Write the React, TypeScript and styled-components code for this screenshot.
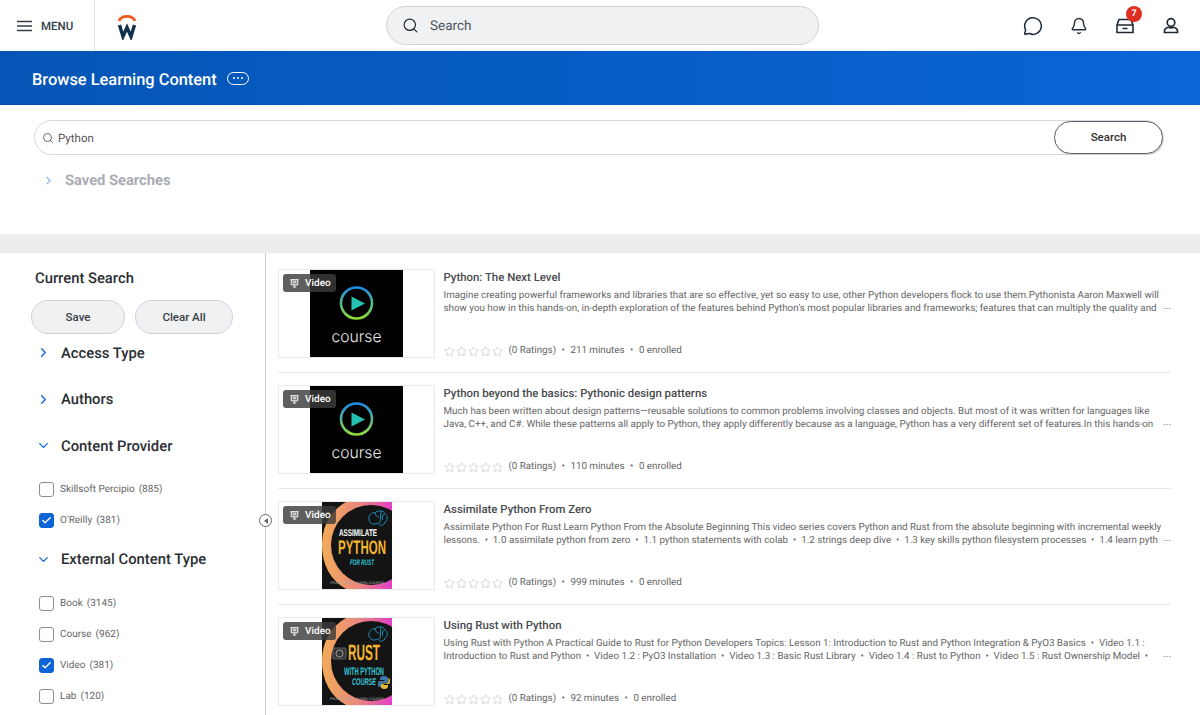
import React from 'react'
import styled, { createGlobalStyle } from 'styled-components'
import { Bell, ChevronDown, ChevronRight, Check, MessageCircle, Search as SearchIcon, Star } from 'lucide-react'

const GlobalStyle = createGlobalStyle`
  html, body {
    margin: 0;
    padding: 0;
    height: 715px;
    overflow: hidden;
    background: #fff;
    font-family: Roboto, "Liberation Sans", sans-serif;
    color: #333;
    text-rendering: geometricPrecision;
  }
  * { box-sizing: border-box; }
`

const Page = styled.div`
  width: 1200px;
  height: 715px;
  display: flex;
  flex-direction: column;
  overflow: hidden;
`

const TopBar = styled.header`
  height: 51px;
  flex: none;
  display: flex;
  align-items: center;
  background: #fff;
`

const MenuArea = styled.div`
  width: 95px;
  height: 51px;
  flex: none;
  display: flex;
  align-items: center;
  gap: 9px;
  padding-left: 17px;
  border-right: 1px solid #dfe2e6;
  font-size: 11.5px;
  font-weight: 500;
  color: #333d47;
`

const Burger = styled.svg`
  width: 15px;
  height: 12px;
  color: #333d47;
`

const Logo = styled.svg`
  width: 22px;
  height: 28px;
  flex: none;
  margin-left: 21px;
`

const GlobalSearch = styled.div`
  width: 433px;
  height: 39px;
  flex: none;
  margin-left: 248px;
  display: flex;
  align-items: center;
  gap: 11px;
  padding-left: 15px;
  border-radius: 20px;
  background: #f0f1f2;
  border: 1px solid #ced3d9;
  font-size: 13.500px;
  color: #4a5561;
`

const TopIcons = styled.div`
  display: flex;
  flex: none;
  align-items: center;
  margin-left: 191px;
  color: #1e2a36;
`

const IconSlot = styled.div`
  width: 46px;
  display: flex;
  justify-content: center;
  position: relative;
`

const Badge = styled.span`
  position: absolute;
  top: -12px;
  right: 6px;
  width: 16px;
  height: 16px;
  border-radius: 50%;
  background: #de2e21;
  color: #fff;
  font-size: 9px;
  font-weight: 700;
  line-height: 16px;
  text-align: center;
`

const Banner = styled.div`
  height: 54px;
  flex: none;
  display: flex;
  align-items: center;
  gap: 10px;
  padding-left: 32px;
  background: linear-gradient(90deg, #0455b5 0%, #0b65d6 100%);
  color: #fff;
`

const BannerTitle = styled.h1`
  margin: 4px 0 0;
  font-size: 16.4px;
  font-weight: 500;
`

const MorePill = styled.div`
  width: 22px;
  height: 13px;
  display: flex;
  align-items: center;
  justify-content: center;
  gap: 2px;
  border: 1px solid #fff;
  border-radius: 7px;
`

const Dot = styled.i`
  width: 2px;
  height: 2px;
  border-radius: 50%;
  background: #fff;
`

const SearchPanel = styled.section`
  height: 129px;
  flex: none;
  padding: 15px 37px 0 34px;
`

const SearchField = styled.div`
  height: 35px;
  display: flex;
  align-items: center;
  gap: 4px;
  padding: 1px 0 0 7px;
  position: relative;
  border: 1px solid #d5d8de;
  border-radius: 18px;
  font-size: 11.500px;
  color: #555;
`

const SearchButton = styled.button`
  position: absolute;
  right: -1px;
  top: 0;
  width: 109px;
  height: 33px;
  padding-bottom: 2px;
  border: 1px solid #5a5f66;
  border-radius: 17px;
  background: #fff;
  box-shadow: 1px 1px 1px #d0d3d8;
  font: 500 11.500px Roboto, sans-serif;
  color: #333;
`

const SavedRow = styled.div`
  display: flex;
  align-items: center;
  gap: 10px;
  margin: 16px 0 0 8px;
  font-size: 14.7px;
  font-weight: 700;
  color: #a9adb2;
`

const Divider = styled.div`
  height: 19px;
  flex: none;
  background: #eceeed;
`

const Body = styled.div`
  flex: 1;
  display: flex;
  min-height: 0;
`

const Sidebar = styled.aside`
  width: 266px;
  flex: none;
  position: relative;
  padding: 17px 0 0 31px;
  border-right: 1px solid #c9ccd0;
`

const CollapseHandle = styled.div`
  position: absolute;
  top: 261px;
  right: -7px;
  width: 13px;
  height: 13px;
  border-radius: 50%;
  border: 1px solid #666;
  background: #fff;
  display: flex;
  align-items: center;
  justify-content: center;
  &::before {
    content: '';
    border-style: solid;
    border-width: 3px 4px 3px 0;
    border-color: transparent #666 transparent transparent;
  }
`

const SideTitle = styled.h2`
  margin: 0 0 13px 4px;
  font-size: 14.8px;
  font-weight: 500;
  line-height: 17px;
  color: #2b2f33;
`

const ButtonRow = styled.div`
  display: flex;
  gap: 10px;
`

const PillButton = styled.button<{ $w: number }>`
  width: ${p => p.$w}px;
  height: 34px;
  border-radius: 17px;
  border: 1px solid #ced3d9;
  background: #f0f1f2;
  font: 500 11.500px Roboto, sans-serif;
  color: #3a3f44;
`

const FacetHead = styled.div<{ $h: number; $mt?: number }>`
  display: flex;
  align-items: flex-start;
  gap: 10px;
  height: ${p => p.$h}px;
  margin-top: ${p => p.$mt ?? 0}px;
  padding-left: 5px;
  font-size: 14.8px;
  font-weight: 500;
  line-height: 18px;
  color: #2b2f33;
  svg { color: #0b65d6; flex: none; margin-top: 1.500px; }
`

const Facets = styled.div`
  margin-top: 9.500px;
`

const CheckRow = styled.label`
  display: flex;
  align-items: center;
  gap: 6px;
  height: 31px;
  padding-left: 8px;
  font-size: 10px;
  color: #666;
`

const Box = styled.span<{ $on?: boolean }>`
  width: 15px;
  height: 15px;
  flex: none;
  display: flex;
  align-items: center;
  justify-content: center;
  border-radius: 3px;
  border: 1px solid ${p => (p.$on ? '#0b65d6' : '#8a9099')};
  background: ${p => (p.$on ? '#0b65d6' : '#fff')};
  color: #fff;
`

const Count = styled.span`
  margin-left: 4px;
`

const Results = styled.main`
  flex: 1;
  min-width: 0;
  padding: 16px 29px 0 12px;
`

const Card = styled.article`
  height: 104px;
  margin-bottom: 12px;
  display: flex;
  gap: 8.500px;
  border-bottom: 1px solid #e8eaec;
`

const Thumb = styled.div`
  width: 157px;
  height: 89px;
  flex: none;
  position: relative;
  display: flex;
  justify-content: center;
  border: 1px solid #e8eaec;
  background: #fff;
`

const TypeTag = styled.div`
  position: absolute;
  top: 4px;
  left: 4px;
  z-index: 1;
  width: 53px;
  height: 18px;
  display: flex;
  align-items: center;
  gap: 6px;
  padding-left: 7px;
  border-radius: 3px;
  background: rgba(60, 60, 60, 0.82);
  color: #fff;
  font-size: 10px;
  font-weight: 500;
`

const Poster = styled.svg<{ $w: number }>`
  width: ${p => p.$w}px;
  height: 87px;
  display: block;
  overflow: visible;
`

const Info = styled.div`
  flex: 1;
  min-width: 0;
  height: 89px;
  display: flex;
  flex-direction: column;
`

const CardTitle = styled.h3`
  margin: 0;
  font-size: 11.4px;
  font-weight: 500;
  line-height: 16px;
  color: #484b4e;
`

const Descr = styled.div`
  margin-top: 4px;
  position: relative;
  padding-right: 12px;
  font-size: 9.800px;
  line-height: 13px;
  color: #666;
  white-space: pre;
  &::after {
    content: '...';
    position: absolute;
    right: 0;
    bottom: 2px;
  }
`

const Meta = styled.div`
  margin-top: auto;
  display: flex;
  align-items: center;
  font-size: 9.800px;
  line-height: 14px;
  color: #666;
  svg { color: #b4b7ba; margin-right: 1.200px; }
`

const Ratings = styled.span`
  margin-left: 4px;
`

const Sep = styled.span`
  margin: 0 5.500px;
`

const CoursePoster = () => (
  <Poster $w={93} viewBox="0 0 93 87">
    <defs>
      <linearGradient id="ring" x1="0" y1="0" x2="0" y2="1">
        <stop offset="0" stopColor="#1a8fe8" />
        <stop offset="1" stopColor="#8fdc3a" />
      </linearGradient>
    </defs>
    <rect width="93" height="87" fill="#000" />
    <circle cx="46.500" cy="33" r="15.500" fill="none" stroke="url(#ring)" strokeWidth="2.600" />
    <path d="M41.500 26.500 L55 33.500 L41.500 40.500 Z" fill="#25c2b0" />
    <text x="21.500" y="72" fontSize="16" textLength="50" lengthAdjust="spacingAndGlyphs" fill="#e8e8e8" fontFamily="Inter, sans-serif" fontWeight="300">course</text>
  </Poster>
)

const Brain = () => (
  <g fill="none" stroke="#1a8fb8" strokeWidth="1">
    <path d="M47 18 C46 13 50 10 53 11 C55 8 62 8 63 12 C66 13 66 19 63 20 C62 24 57 24 56 21 C52 23 48 22 47 18 Z" />
    <path d="M53 11 C54 14 55 15 57 15 M59 9 L58 21 M62 12 C60 14 60 16 61 18" />
  </g>
)

const PosterBase = ({ id, children }: { id: string; children: React.ReactNode }) => (
  <Poster $w={70} viewBox="0 0 70 87">
    <defs>
      <linearGradient id={id} x1="0" y1="0" x2="1" y2="0">
        <stop offset="0" stopColor="#f2ab57" />
        <stop offset="0.5" stopColor="#ea8a7c" />
        <stop offset="1" stopColor="#e23fc4" />
      </linearGradient>
      <clipPath id={`${id}-clip`}>
        <rect width="70" height="87" />
      </clipPath>
    </defs>
    <g clipPath={`url(#${id}-clip)`}>
      <rect width="70" height="87" fill="#141414" />
      <path d="M24 0 H70 V87 H24 C8 78 0 62 0 43 C0 25 8 9 24 0 Z" fill={`url(#${id})`} />
      <circle cx="49" cy="43" r="40" fill="#141414" />
    </g>
    <Brain />
    {children}
    <text x="8" y="82" fontSize="3.600" textLength="54" lengthAdjust="spacingAndGlyphs" fill="#aaa" fontFamily="Roboto, sans-serif">PRACTICAL &#183; LEARN COURSE</text>
  </Poster>
)

const AssimilatePoster = () => (
  <PosterBase id="grad-a">
    <text x="17" y="34" fontSize="9.700" fontWeight="700" fill="#fff" fontFamily="Liberation Sans, sans-serif" textLength="38" lengthAdjust="spacingAndGlyphs">ASSIMILATE</text>
    <text x="16" y="52" fontSize="19.500" fontWeight="700" fill="#f5b52e" fontFamily="Liberation Sans, sans-serif" textLength="48" lengthAdjust="spacingAndGlyphs">PYTHON</text>
    <text x="28" y="63" fontSize="8" fontWeight="700" fontStyle="italic" fill="#27c4d8" fontFamily="Liberation Sans, sans-serif" textLength="24" lengthAdjust="spacingAndGlyphs">FOR RUST</text>
  </PosterBase>
)

const RustPoster = () => (
  <PosterBase id="grad-b">
    <rect x="11" y="30" width="13" height="11" rx="1" fill="#333" stroke="#888" strokeWidth="0.600" />
    <circle cx="17.500" cy="35.500" r="3.500" fill="none" stroke="#bbb" strokeWidth="0.800" />
    <text x="26" y="42" fontSize="22" fontWeight="700" fill="#f5b52e" fontFamily="Liberation Sans, sans-serif" textLength="32" lengthAdjust="spacingAndGlyphs">RUST</text>
    <text x="22" y="57" fontSize="11" fontWeight="700" fill="#34c6d4" fontFamily="Liberation Sans, sans-serif" textLength="40" lengthAdjust="spacingAndGlyphs">WITH PYTHON</text>
    <text x="30" y="67" fontSize="9.700" fontWeight="700" fontStyle="italic" fill="#34c6d4" fontFamily="Liberation Sans, sans-serif" textLength="24" lengthAdjust="spacingAndGlyphs">COURSE</text>
    <path d="M62 58 C59 58 58 59 58 61 V62 H62.500 V63 H57 C55.500 64 55.500 68 57 69 H59 V67 C59 65.500 60 65 61 65 H64 C65.500 65 66 64 66 63 V61 C66 59 65 58 62 58 Z" fill="#3a78b0" />
    <path d="M62 71 C65 71 66 70 66 68 V67 H61.500 V66 H67 C68.500 65 68.500 61 67 60 H66.500 V62 C66.500 64 65.500 65.500 64 65.500 H60.500 C59.500 65.500 59 66 59 67 V68 C59 70 59.500 71 62 71 Z" fill="#e5b93a" />
  </PosterBase>
)

const Stars = () => (
  <>
    {[0, 1, 2, 3, 4].map(i => (
      <Star key={i} size={11} strokeWidth={1.2} />
    ))}
  </>
)

const courses = [
  {
    title: 'Python: The Next Level',
    lines: [
      'Imagine creating powerful frameworks and libraries that are so effective, yet so easy to use, other Python developers flock to use them.Pythonista Aaron Maxwell will',
      'show you how in this hands-on, in-depth exploration of the features behind Python’s most popular libraries and frameworks; features that can multiply the quality and',
    ],
    minutes: 211,
    poster: <CoursePoster />,
  },
  {
    title: 'Python beyond the basics: Pythonic design patterns',
    lines: [
      'Much has been written about design patterns—reusable solutions to common problems involving classes and objects. But most of it was written for languages like',
      'Java, C++, and C#. While these patterns all apply to Python, they apply differently because as a language, Python has a very different set of features.In this hands-on',
    ],
    minutes: 110,
    poster: <CoursePoster />,
  },
  {
    title: 'Assimilate Python From Zero',
    lines: [
      'Assimilate Python For Rust Learn Python From the Absolute Beginning This video series covers Python and Rust from the absolute beginning with incremental weekly',
      'lessons.  •  1.0 assimilate python from zero  •  1.1 python statements with colab  •  1.2 strings deep dive  •  1.3 key skills python filesystem processes  •  1.4 learn pyth',
    ],
    minutes: 999,
    poster: <AssimilatePoster />,
  },
  {
    title: 'Using Rust with Python',
    lines: [
      'Using Rust with Python A Practical Guide to Rust for Python Developers Topics: Lesson 1: Introduction to Rust and Python Integration & PyO3 Basics  •  Video 1.1 :',
      'Introduction to Rust and Python  •  Video 1.2 : PyO3 Installation  •  Video 1.3 : Basic Rust Library  •  Video 1.4 : Rust to Python  •  Video 1.5 : Rust Ownership Model  •',
    ],
    minutes: 92,
    poster: <RustPoster />,
  },
]

const CheckItem = ({ label, count, on }: { label: string; count: number; on?: boolean }) => (
  <CheckRow>
    <Box $on={on}>{on && <Check size={11} strokeWidth={3} />}</Box>
    <span>
      {label}
      <Count>({count})</Count>
    </span>
  </CheckRow>
)

export default function App() {
  return (
    <Page>
      <GlobalStyle />
      <TopBar>
        <MenuArea>
          <Burger viewBox="0 0 15 12">
            <path d="M0 1.500H15M0 6H15M0 10.500H15" stroke="currentColor" strokeWidth="1.500" />
          </Burger>
          MENU
        </MenuArea>
        <Logo viewBox="0 0 22 28">
          <path d="M3 9 C5.500 2.800 16.500 2.800 19 9" fill="none" stroke="#f2581c" strokeWidth="2.800" />
          <path d="M3.500 13 L7 24.500 L11 15.500 L15 24.500 L18.500 13" fill="none" stroke="#10304f" strokeWidth="3.400" />
        </Logo>
        <GlobalSearch>
          <SearchIcon size={17} strokeWidth={1.7} color="#1e2a36" />
          Search
        </GlobalSearch>
        <TopIcons>
          <IconSlot><MessageCircle size={20} strokeWidth={1.8} /></IconSlot>
          <IconSlot><Bell size={18} strokeWidth={1.9} /></IconSlot>
          <IconSlot>
            <svg width="18" height="16" viewBox="0 0 18 16" fill="none" stroke="currentColor" strokeWidth="1.600">
              <path d="M1 7 L3 1.500 H15 L17 7 V14.500 H1 Z M1 7 H17 M6.500 10.500 H11.500" />
            </svg>
            <Badge>7</Badge>
          </IconSlot>
          <IconSlot>
            <svg width="16" height="17" viewBox="0 0 16 17" fill="none" stroke="currentColor" strokeWidth="1.700">
              <circle cx="8" cy="5.500" r="3.800" />
              <path d="M1.500 15.500 V14 C1.500 12 3.500 10.800 5.500 10.300 C7 11 9 11 10.500 10.300 C12.500 10.800 14.500 12 14.500 14 V15.500 Z" />
            </svg>
          </IconSlot>
        </TopIcons>
      </TopBar>
      <Banner>
        <BannerTitle>Browse Learning Content</BannerTitle>
        <MorePill><Dot /><Dot /><Dot /></MorePill>
      </Banner>
      <SearchPanel>
        <SearchField>
          <SearchIcon size={12} color="#666" />
          Python
          <SearchButton>Search</SearchButton>
        </SearchField>
        <SavedRow>
          <ChevronRight size={13} color="#8fb8e8" />
          Saved Searches
        </SavedRow>
      </SearchPanel>
      <Divider />
      <Body>
        <Sidebar>
          <SideTitle>Current Search</SideTitle>
          <ButtonRow>
            <PillButton $w={94}>Save</PillButton>
            <PillButton $w={98}>Clear All</PillButton>
          </ButtonRow>
          <Facets>
            <FacetHead $h={46.5}><ChevronRight size={15} />Access Type</FacetHead>
            <FacetHead $h={46.5}><ChevronRight size={15} />Authors</FacetHead>
            <FacetHead $h={37.5}><ChevronDown size={15} />Content Provider</FacetHead>
            <CheckItem label="Skillsoft Percipio" count={885} />
            <CheckItem label="O'Reilly" count={381} on />
            <FacetHead $h={37.5} $mt={14}><ChevronDown size={15} />External Content Type</FacetHead>
            <CheckItem label="Book" count={3145} />
            <CheckItem label="Course" count={962} />
            <CheckItem label="Video" count={381} on />
            <CheckItem label="Lab" count={120} />
          </Facets>
          <CollapseHandle />
        </Sidebar>
        <Results>
          {courses.map(c => (
            <Card key={c.title}>
              <Thumb>
                <TypeTag>
                  <svg width="9" height="9" viewBox="0 0 9 9" fill="none" stroke="#fff" strokeWidth="1">
                    <path d="M0.500 0.700H8.500M1.200 0.700V5.800H7.800V0.700M2.500 2.200H6.500M2.500 3.800H6.500M4.500 5.800V7.500M2.800 8H6.200" />
                  </svg>
                  Video
                </TypeTag>
                {c.poster}
              </Thumb>
              <Info>
                <CardTitle>{c.title}</CardTitle>
                <Descr>
                  {c.lines.map(l => (
                    <div key={l}>{l}</div>
                  ))}
                </Descr>
                <Meta>
                  <Stars />
                  <Ratings>(0 Ratings)</Ratings>
                  <Sep>•</Sep>
                  {c.minutes} minutes
                  <Sep>•</Sep>
                  0 enrolled
                </Meta>
              </Info>
            </Card>
          ))}
        </Results>
      </Body>
    </Page>
  )
}
